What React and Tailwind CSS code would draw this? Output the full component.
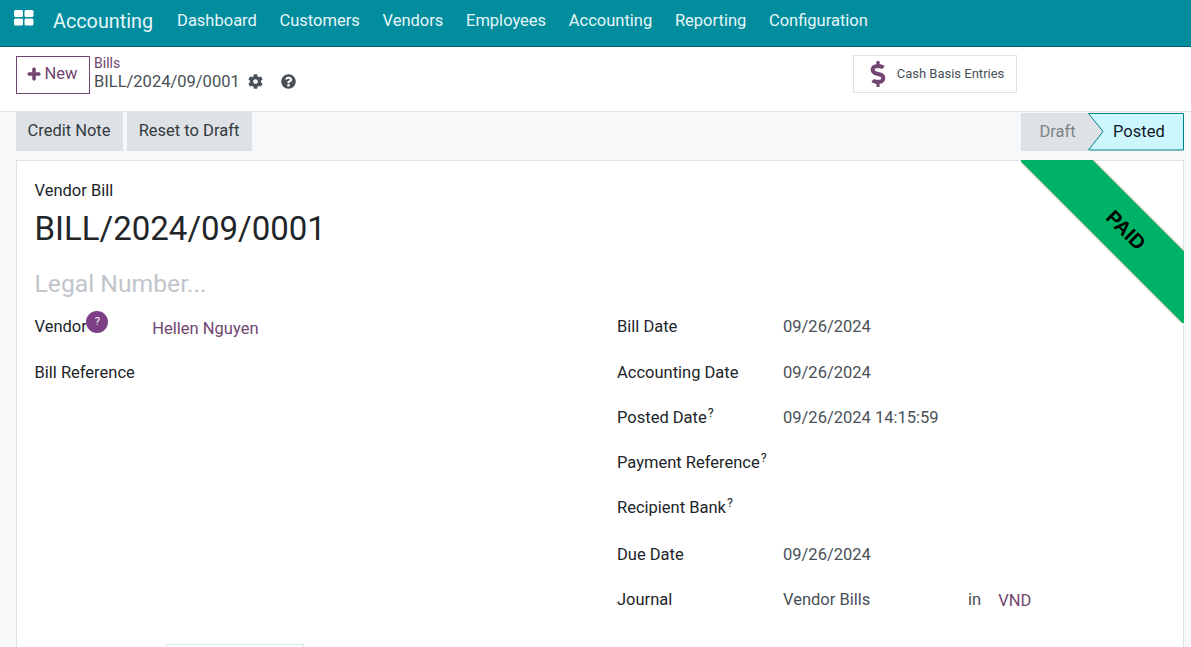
import { FaCog, FaQuestionCircle, FaPlus, FaDollarSign } from "react-icons/fa";

const menu = ["Dashboard", "Customers", "Vendors", "Employees", "Accounting", "Reporting", "Configuration"];

export default function App() {
  return (
    <div className="h-[647px] overflow-hidden bg-[#f6f8fa] text-[16.5px] text-[#212529] font-['Roboto',sans-serif]">
      {/* NAVBAR */}
      <nav className="h-[47px] pb-[3px] bg-[#018d9e] border-b border-[#01606b] flex items-center text-white">
        <svg width="20" height="16" viewBox="0 0 20 16" className="ml-[14px] mb-[8px]" fill="#fff">
          <rect x="0" y="0" width="9" height="7" rx="1.5" />
          <rect x="10.5" y="0" width="9" height="7" rx="1.5" />
          <rect x="0" y="8.5" width="9" height="7" rx="1.5" />
          <rect x="10.5" y="8.5" width="9" height="7" rx="1.5" />
        </svg>
        <span className="ml-[19px] text-[19.8px] text-[#e6f6f8]">Accounting</span>
        <div className="ml-[24px] flex gap-[22.67px] text-[#e6f6f8]">
          {menu.map((m) => (
            <span key={m}>{m}</span>
          ))}
        </div>
      </nav>

      {/* CONTROL PANEL */}
      <div className="h-[65px] bg-white border-b border-[#dee2e6] flex items-start pl-4 pt-[8px]">
        <button className="w-[74px] h-[38px] mt-px pb-[2px] pr-[2px] border border-[#71456f] flex items-center justify-center gap-[4px] text-[#71456f]">
          <FaPlus size={14} stroke="currentColor" strokeWidth={30} />
          New
        </button>
        <div className="ml-[4px]">
          <div className="text-[14px] leading-[17px] text-[#71456f]">Bills</div>
          <div className="leading-[20px] text-[#495057]">BILL/2024/09/0001</div>
        </div>
        <FaCog size={15} className="ml-[8px] mt-[19px] text-[#495057]" />
        <FaQuestionCircle size={15} className="ml-[18px] mt-[19px] text-[#495057]" />
        <button className="ml-[557px] w-[164px] h-[38px] bg-white border border-[#dee2e6] flex items-center text-[13px] text-[#495057]">
          <FaDollarSign size={26} className="ml-[11px] text-[#71456f]" />
          <span className="ml-[6px]">Cash Basis Entries</span>
        </button>
      </div>

      {/* ACTIONS + STATUS */}
      <div className="h-[39px] flex pl-4 pr-[7px]">
        <button className="w-[107px] h-[39px] pr-px bg-[#dee2e6] text-[#343a40]">Credit Note</button>
        <button className="ml-1 w-[125px] h-[39px] pr-px bg-[#dee2e6] text-[#343a40]">Reset to Draft</button>
        <div className="ml-auto flex h-[38px] mt-px">
          <div className="w-[67px] pl-[6px] bg-[#dee2e6] text-[#7c8287] flex items-center justify-center">Draft</div>
          <div className="relative w-[96px] flex items-center text-[#111827]">
            <svg width="96" height="38" viewBox="0 0 96 38" className="absolute inset-0">
              <polygon points="0,0 15,18.5 0,37.5" fill="#dee2e6" />
              <polygon points="0.5,0.5 95.5,0.5 95.5,37 0.5,37 15,18.5" fill="#ccf7ff" stroke="#017e84" />
            </svg>
            <span className="relative ml-[25px]">Posted</span>
          </div>
        </div>
      </div>

      {/* SHEET */}
      <div className="relative ml-4 mr-[7px] mt-[9px] h-[520px] bg-white border border-[#dee2e6] pl-[17.5px] pr-4">
        <div className="absolute right-[-1px] top-[-1px] w-[163px] h-[163px] overflow-hidden">
          <div className="absolute left-[-45px] top-[44px] w-[300px] h-[52px] rotate-45 bg-[#00b265] shadow-[0_0_3px_rgba(220,53,69,0.35)] flex items-center justify-center font-['Liberation_Sans',sans-serif] font-bold text-[20px] text-black">
            PAID
          </div>
        </div>

        <div className="pt-[20px] leading-[19px]">Vendor Bill</div>
        <h1 className="mt-[9px] text-[33px] leading-[40px]">BILL/2024/09/0001</h1>
        <div className="mt-[21px] text-[24.7px] leading-[28px] text-[#c0c5cb]">Legal Number...</div>

        <div className="mt-[17px] grid grid-cols-[582.5px_1fr]">
          {/* LEFT */}
          <div>
            <div className="h-[46px] flex">
              <span className="leading-[19px] mt-[2px]">Vendor</span>
              <span className="w-[22px] h-[22px] mt-[-4px] ml-[-0.5px] rounded-full bg-[#7c3f86] text-white text-[11px] flex items-center justify-center">?</span>
              <span className="ml-[44px] mt-[4px] leading-[19px] text-[#71456f]">Hellen Nguyen</span>
            </div>
            <div className="leading-[19px] mt-[2px]">Bill Reference</div>
          </div>

          {/* RIGHT */}
          <div className="pt-[2px]">
            <FormRow label="Bill Date" value="09/26/2024" h="h-[46px]" />
            <FormRow label="Accounting Date" value="09/26/2024" h="h-[45px]" />
            <FormRow label="Posted Date" help value="09/26/2024 14:15:59" h="h-[45px]" />
            <FormRow label="Payment Reference" help h="h-[45px]" />
            <FormRow label="Recipient Bank" help h="h-[47px]" />
            <FormRow label="Due Date" value="09/26/2024" h="h-[45px]" />
            <div className="h-[45px] flex">
              <span className="w-[166px] leading-[19px]">Journal</span>
              <span className="w-[185px] leading-[19px] text-[#495057]">Vendor Bills</span>
              <span className="leading-[19px] text-[#495057]">in</span>
              <span className="ml-[17px] mt-px leading-[19px] text-[#71456f]">VND</span>
            </div>
          </div>
        </div>

        <div className="ml-[131.5px] mt-[9px] w-[138px] h-8 border border-[#dee2e6] bg-white" />
      </div>
    </div>
  );
}

function FormRow({ label, value, help, h }) {
  return (
    <div className={`${h} flex leading-[19px]`}>
      <span className="w-[166px] flex items-start">
        {label}
        {help && <sup className="text-[12.5px] leading-[12px] mt-[-1px] top-0 ml-px">?</sup>}
      </span>
      {value && <span className="text-[#495057]">{value}</span>}
    </div>
  );
}
